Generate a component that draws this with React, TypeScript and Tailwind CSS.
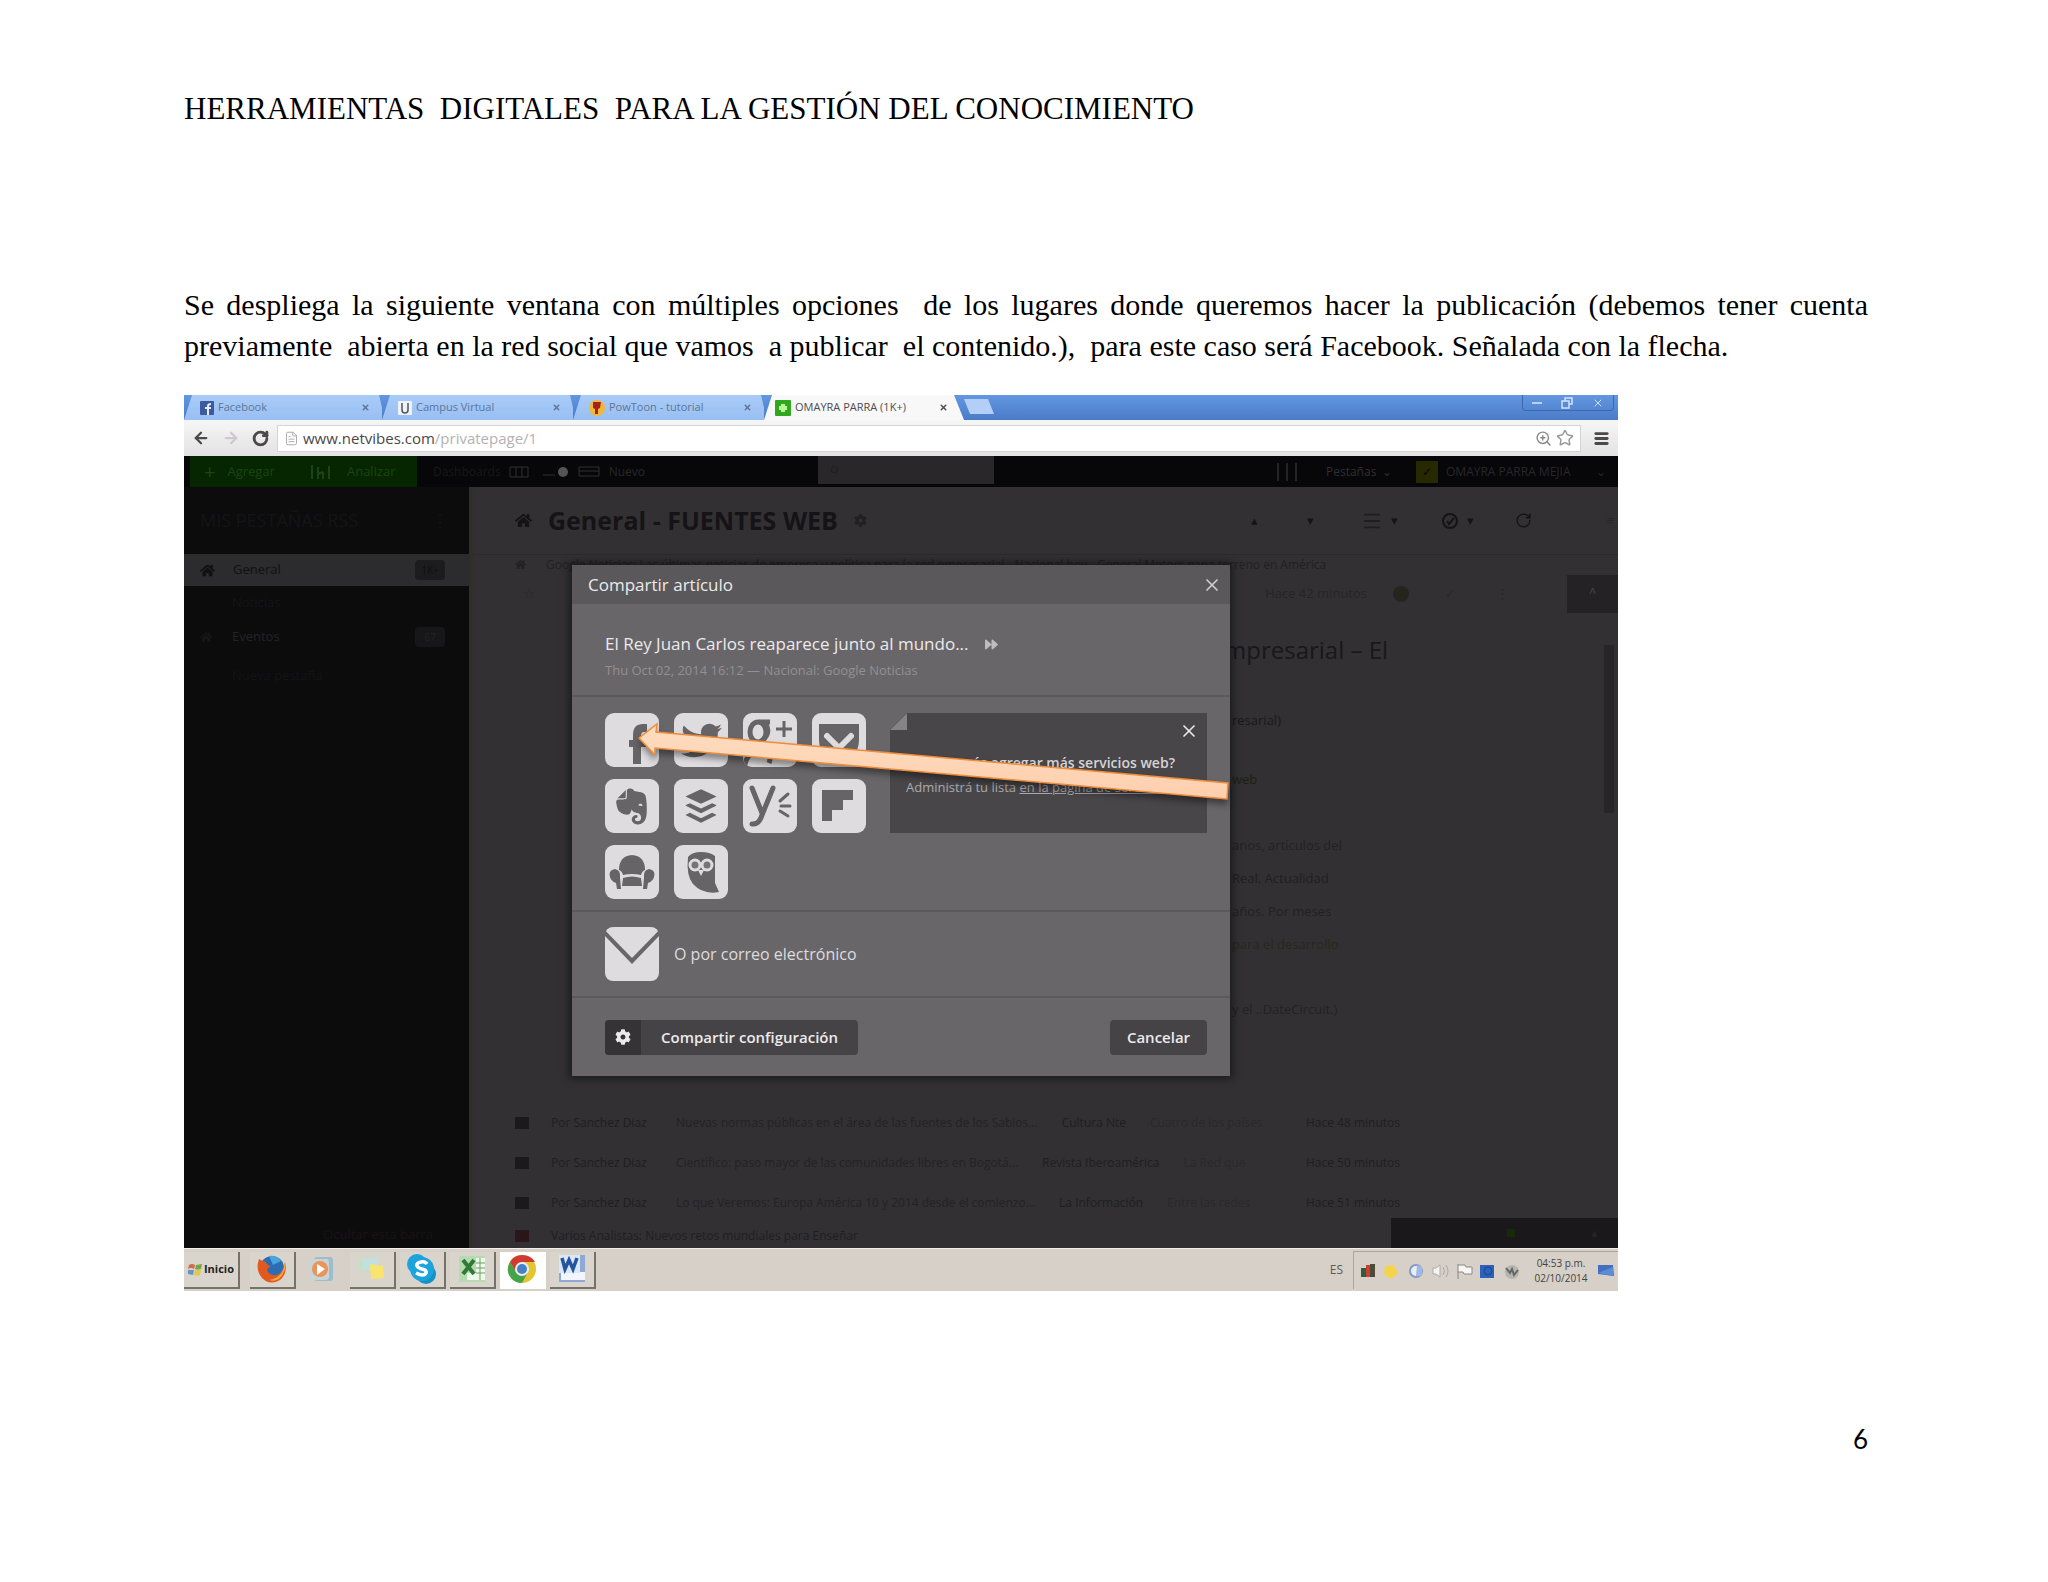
import React, { useState } from "react";
import { FaBuffer, FaCog, FaEvernote, FaForward, FaHome, FaTwitter } from "react-icons/fa";
import { ArrowLeft, ArrowRight, FileText, Menu, RotateCw, Search, Star, X, ZoomIn } from "lucide-react";

type Tab = { title: string; favicon: React.ReactNode; width: string };

const tabs: Tab[] = [
  {
    title: "Facebook",
    width: "w-[198px]",
    favicon: (
      <svg viewBox="0 0 14 14" className="size-3.5 shrink-0">
        <rect width="14" height="14" rx="1" fill="#3d5a9e" />
        <path d="M9 14V8h2V6H9V5q0-1 2-1V2Q7 2 7 5v1H5v2h2v6z" fill="#e6eefb" />
      </svg>
    ),
  },
  {
    title: "Campus Virtual",
    width: "w-[191px]",
    favicon: (
      <svg viewBox="0 0 14 14" className="size-3.5 shrink-0">
        <rect width="14" height="14" rx="1" fill="#eef2fa" />
        <path d="M4 2v7q0 3 3 3t3-3V2" fill="none" stroke="#555" strokeWidth="1.5" />
      </svg>
    ),
  },
  {
    title: "PowToon - tutorial",
    width: "w-[191px]",
    favicon: (
      <svg viewBox="0 0 16 16" className="size-4 shrink-0">
        <circle cx="8" cy="8" r="8" fill="#f0b838" />
        <path d="M4 2h8l-1 6-2 1v5H6V9L4 8z" fill="#a8201c" />
      </svg>
    ),
  },
];

const Favicon: React.FC = () => (
  <svg viewBox="0 0 16 16" className="size-4 shrink-0">
    <rect width="16" height="16" rx="1" fill="#2fa81d" />
    <path d="M8 4v8M4 8h8" stroke="#b9f59a" strokeWidth="4" />
  </svg>
);

const TabStrip: React.FC = () => (
  <div className="flex h-[25px] items-stretch overflow-hidden bg-linear-to-b from-[#6397e0] to-[#4a7bc8] text-[11px]">
    {tabs.map((tab) => (
      <div
        key={tab.title}
        className={`${tab.width} flex items-center gap-1 bg-linear-to-b from-[#a9cbf7] to-[#98bff2] pr-3 pl-4 text-[#5d7596] [clip-path:polygon(8px_0,calc(100%-3px)_0,100%_50%,100%_100%,0_100%)]`}
      >
        {tab.favicon}
        <span className="flex-1">{tab.title}</span>
        <button aria-label="Cerrar pestaña">
          <X size={9} strokeWidth={4} />
        </button>
      </div>
    ))}
    <div className="flex w-[200px] items-center gap-1 bg-[#f8f8f9] pr-[16px] pl-[11px] text-[#4f4b4e] [clip-path:polygon(8px_0,calc(100%-10px)_0,100%_100%,0_100%)]">
      <Favicon />
      <span className="flex-1">OMAYRA PARRA (1K+)</span>
      <button aria-label="Cerrar pestaña">
        <X size={9} strokeWidth={4} />
      </button>
    </div>
    <button
      aria-label="Nueva pestaña"
      className="mt-1 h-[15px] w-[30px] bg-[#b3cff7] [clip-path:polygon(0_0,24px_0,100%_100%,6px_100%)]"
    />
    <div className="mr-1 ml-auto flex h-4 w-[92px] items-center justify-around rounded-b border border-t-0 border-[#4067ad] text-[#d3e2fa]">
      <button aria-label="Minimizar" className="h-0.5 w-2.5 bg-[#b8d0f5]" />
      <button aria-label="Restaurar">
        <svg viewBox="0 0 12 12" className="size-3" fill="none" stroke="currentColor" strokeWidth="1.5">
          <rect x="1" y="4" width="7" height="7" />
          <path d="M4 4V1h7v6H8" />
        </svg>
      </button>
      <button aria-label="Cerrar">
        <X size={12} strokeWidth={2} />
      </button>
    </div>
  </div>
);

const Toolbar: React.FC = () => {
  const [url, setUrl] = useState<string>("");

  return (
    <div className="flex h-9 items-center bg-linear-to-b from-[#f6f6f7] to-[#e4e2e3] px-2 text-[#4a4849]">
      <button aria-label="Atrás">
        <ArrowLeft size={18} strokeWidth={3} />
      </button>
      <button aria-label="Adelante" className="ml-3 text-[#cccacc]">
        <ArrowRight size={18} strokeWidth={3} />
      </button>
      <button aria-label="Recargar" className="ml-3">
        <RotateCw size={17} strokeWidth={4} />
      </button>
      <div className="ml-2 flex h-[27px] flex-1 items-center border border-[#d5d3d5] bg-white px-1.5">
        <FileText size={15} className="text-[#a9a7a9]" strokeWidth={1.5} />
        <div className="relative ml-1 h-full flex-1">
          {url === "" && (
            <span className="pointer-events-none absolute inset-0 flex items-center text-[15px]">
              www.netvibes.com<span className="text-[#b3b1b3]">/privatepage/1</span>
            </span>
          )}
          <input
            aria-label="Dirección"
            value={url}
            onChange={(event) => setUrl(event.target.value)}
            className="h-full w-full bg-transparent text-[15px] outline-none"
          />
        </div>
        <ZoomIn size={17} className="text-[#888]" strokeWidth={2} />
        <Star size={18} className="ml-1 text-[#999]" strokeWidth={2} />
      </div>
      <button aria-label="Menú" className="ml-3">
        <Menu size={17} strokeWidth={4} />
      </button>
    </div>
  );
};

const TopBar: React.FC = () => (
  <div className="flex h-[31px] items-center bg-[#070609] pl-1.5 text-[12px] text-[#29272b]">
    <div className="flex h-full w-[227px] items-center bg-[#052600] pl-3.5 text-[13px] text-[#1d4513]">
      <button className="flex items-center gap-3">
        <span className="text-xl leading-4">+</span>Agregar
      </button>
      <button className="ml-9 flex items-center gap-4">
        <svg viewBox="0 0 20 14" className="h-3.5 w-5" stroke="currentColor" strokeWidth="2">
          <path d="M1 0v14M7 2v12M12 7v7M18 1v13M7 9l5-2" fill="none" />
        </svg>
        Analizar
      </button>
    </div>
    <span className="ml-4 text-[#19171b]">Dashboards</span>
    <svg viewBox="0 0 92 14" className="ml-2 h-3.5 w-[92px]" fill="none" stroke="#302e32">
      <path d="M1 2h18v10H1zM7 2v10M13 2v10M34 10h12M70 2h20v9H70zM70 6h20" />
      <circle cx="54" cy="7" r="5" fill="#555356" stroke="none" />
    </svg>
    <span className="ml-2 w-10">Nuevo</span>
    <div className="ml-[169px] flex h-full items-start">
      <label className="flex h-7 w-[176px] items-center bg-[#29272a] pl-3">
        <Search size={10} className="text-[#1b191c]" />
        <input aria-label="Buscar" className="w-full bg-transparent outline-none" />
      </label>
    </div>
    <div className="ml-auto flex items-center pr-3">
      <svg viewBox="0 0 22 18" className="h-[18px] w-[22px]" stroke="#252327" strokeWidth="2">
        <path d="M2 0v18M11 0v18M20 0v18" />
      </svg>
      <button className="ml-7 flex w-[66px] justify-between text-[#302e32]">
        Pestañas <span>⌄</span>
      </button>
      <span className="ml-6 flex size-[22px] items-center justify-center bg-[#272900] text-[#080800]">✓</span>
      <button className="ml-2 flex w-[160px] justify-between">
        OMAYRA PARRA MEJIA <span>⌄</span>
      </button>
    </div>
  </div>
);

const Sidebar: React.FC = () => (
  <nav className="flex w-[285px] shrink-0 flex-col bg-[#0c0c0d] text-[13px] text-[#1d1c1e]">
    <div className="flex h-[67px] items-center justify-between pr-5 pl-4 text-[18px] text-[#151416]">
      <span>MIS PESTAÑAS RSS</span>
      <span>⋮</span>
    </div>
    <a href="#general" className="flex h-8 items-center bg-[#2c2b2d] pr-6 pl-4 text-[#111012]">
      <FaHome size={15} />
      <span className="ml-[18px] flex-1">General</span>
      <span className="flex h-5 w-[30px] items-center justify-center rounded bg-[#1c1b1e] text-[10px]">1K+</span>
    </a>
    <a href="#noticias" className="flex h-[34px] items-center pl-12 text-[#151416]">
      Noticias
    </a>
    <a href="#eventos" className="flex h-[34px] items-center pr-6 pl-4 text-[#242326]">
      <FaHome size={12} className="text-[#171618]" />
      <span className="ml-5 flex-1">Eventos</span>
      <span className="flex h-5 w-[30px] items-center justify-center rounded bg-[#171618] text-[10px]">67</span>
    </a>
    <a href="#nueva" className="flex h-11 items-center pl-12 text-[#141315]">
      Nueva pestaña
    </a>
    <span className="mt-auto pr-9 pb-1 text-right text-[#181416]">Ocultar esta barra</span>
  </nav>
);

const articleLines = [
  { text: "resarial)", className: "h-[59px] text-[#1a181b]" },
  { text: "web", className: "h-[66px] text-[#1b2212]" },
  { text: "anos, artículos del", className: "h-[33px] text-[#232124]" },
  { text: "Real. Actualidad", className: "h-[33px] text-[#201e21]" },
  { text: "años. Por meses", className: "h-[33px] text-[#222023]" },
  { text: "para el desarrollo", className: "h-[65px] text-[#272719]" },
  { text: "y el ..DateCircuit.)", className: "text-[#232124]" },
];

const feedRows = [
  {
    title: "Por Sanchez Diaz",
    body: "Nuevas normas públicas en el área de las fuentes de los Sabios...",
    source: "Cultura Nte",
    detail: "Cuatro de los países",
    time: "Hace 48 minutos",
  },
  {
    title: "Por Sanchez Diaz",
    body: "Científico: paso mayor de las comunidades libres en Bogotá...",
    source: "Revista Iberoamérica",
    detail: "La Red que",
    time: "Hace 50 minutos",
  },
  {
    title: "Por Sanchez Diaz",
    body: "Lo que Veremos: Europa América 10 y 2014 desde el comienzo...",
    source: "La Información",
    detail: "Entre las redes",
    time: "Hace 51 minutos",
  },
];

const Feed: React.FC = () => (
  <main className="relative flex min-w-0 flex-1 flex-col border-l-4 border-[#2f302c] bg-[#323033] text-[13px] text-[#1e1c1f]">
    <header className="flex h-[67px] items-center pl-[42px] text-[#151316]">
      <FaHome size={17} />
      <h2 className="ml-4 font-['Open_Sans',sans-serif] text-[25px] font-bold whitespace-nowrap">General - FUENTES WEB</h2>
      <FaCog size={13} className="ml-4 text-[#211f22]" />
      <div className="ml-auto flex items-center pr-1">
        <span className="w-14">▴</span>
        <span className="w-[54px]">▾</span>
        <Menu size={22} strokeWidth={2} className="text-[#1f1d20]" />
        <span className="ml-2 w-[50px]">▾</span>
        <svg viewBox="0 0 18 18" className="size-[18px]" fill="none" stroke="currentColor" strokeWidth="2">
          <circle cx="9" cy="9" r="7" />
          <path d="m6 9 2 3 5-6" />
        </svg>
        <span className="ml-2 w-12">▾</span>
        <RotateCw size={17} strokeWidth={2} />
        <span className="ml-[74px] text-[#29272a]">≡</span>
      </div>
    </header>
    <div className="flex h-5 items-center border-t border-[#2c2a2d] pl-[42px] text-[12px] leading-3 whitespace-nowrap text-[#222023]">
      <FaHome size={11} />
      <span className="ml-5">
        Google Noticias: Las últimas noticias de empresa y política para la red empresarial - Nacional hoy - General Motors
        gana terreno en América
      </span>
    </div>
    <div className="flex h-[40px] items-center pl-[50px]">
      <span className="text-[#29272a]">☆</span>
      <span className="ml-auto text-[#262427]">Hace 42 minutos</span>
      <span className="ml-[26px] size-4 rounded-full bg-[#25241d]" />
      <span className="ml-9 text-[#2a282b]">✓</span>
      <span className="ml-10 text-[#2a282b]">⋮</span>
      <button aria-label="Subir" className="ml-[58px] h-[38px] w-[51px] bg-[#242225] pb-1 text-[#454346]">
        ˄
      </button>
    </div>
    <article className="flex h-[489px] justify-end">
      <div className="w-[372px] pt-5">
        <h3 className="-ml-2 h-[77px] font-['Open_Sans',sans-serif] text-[24px] leading-8 whitespace-nowrap text-[#19171a]">
          mpresarial – El
        </h3>
        {articleLines.map((line) => (
          <p key={line.text} className={line.className}>
            {line.text}
          </p>
        ))}
      </div>
      <span className="mt-[31px] mr-1 h-[168px] w-2.5 bg-[#272528]" />
    </article>
    <ul className="text-[12px] text-[#201e21]">
      {feedRows.map((row) => (
        <li key={row.time} className="flex h-10 items-center pr-[218px] pl-[42px] whitespace-nowrap">
          <span className="h-3 w-3.5 bg-[#1b191c]" />
          <span className="ml-[22px] w-[125px]">{row.title}</span>
          <span className="text-[#242225]">{row.body}</span>
          <span className="ml-6">{row.source}</span>
          <span className="ml-6 text-[#2a282b]">{row.detail}</span>
          <span className="ml-auto">{row.time}</span>
        </li>
      ))}
      <li className="flex h-[25px] items-center pl-[42px]">
        <span className="h-3 w-3.5 bg-[#2a1518]" />
        <span className="ml-[22px]">Varios Analistas: Nuevos retos mundiales para Enseñar</span>
      </li>
    </ul>
    <div className="absolute right-0 bottom-0 flex h-[30px] w-[227px] items-center justify-end gap-[76px] bg-[#1a181b] px-5 text-[#252326]">
      <span className="size-2 bg-[#142b07]" />
      <span>▴</span>
    </div>
  </main>
);

const services: { name: string; icon: React.ReactNode }[] = [
  {
    name: "Facebook",
    icon: <path d="M28 51V34h-4v-7h4v-5q0-11 10-11h4v8h-3q-3 0-3 4v4h6l-1 7h-5v17z" fill="currentColor" />,
  },
  { name: "Twitter", icon: <FaTwitter x="7" y="7" size={41} /> },
  {
    name: "Google+",
    icon: (
      <g fill="none" stroke="currentColor">
        <ellipse cx="15" cy="19" rx="8" ry="10" strokeWidth="5" />
        <path d="M16 9h11M22 10q6 8-1 16-6 4-1 8 10 6 6 16" strokeWidth="5" />
        <path d="M2 52q2-14 18-15" strokeWidth="5" />
        <path d="M41 8v16M33 16h16" strokeWidth="3" />
      </g>
    ),
  },
  {
    name: "Pocket",
    icon: (
      <>
        <path d="M7 11h40v16q0 18-20 21Q7 45 7 27z" fill="currentColor" />
        <path d="m15 23 12 12 12-12" fill="none" stroke="#dedcde" strokeWidth="6" strokeLinecap="round" strokeLinejoin="round" />
      </>
    ),
  },
  { name: "Evernote", icon: <FaEvernote x="6" y="7" size={41} /> },
  { name: "Buffer", icon: <FaBuffer x="8" y="8" size={38} /> },
  {
    name: "Yammer",
    icon: (
      <g fill="none" stroke="currentColor" strokeLinecap="round" strokeWidth="5">
        <path d="m9 9 10 25M30 9 19 36q-3 10-10 9" />
        <path d="m37 22 8-7M38 27h9M37 32l8 5" strokeWidth="3" />
      </g>
    ),
  },
  { name: "Flipboard", icon: <path d="M10 11h31v10H31v10H20v11H10z" fill="currentColor" /> },
  {
    name: "Readability",
    icon: (
      <g fill="currentColor">
        <path d="M14 25q0-14 13-15 13 1 13 15-3 1-4 5-9-2-18 0-1-4-4-5z" />
        <path d="M18 33q9-3 18 0l1 8H17z" />
        <path d="M5 32q-2-7 5-8 6 1 5 9l1 11h-4l-1-6q-5-2-6-6zM49 32q2-7-5-8-6 1-5 9l-1 11h4l1-6q5-2 6-6z" />
      </g>
    ),
  },
  {
    name: "HootSuite",
    icon: (
      <>
        <path d="M14 12q4-5 13-5t14 4v27l4 9q-16 3-26-8-7-8-5-27z" fill="currentColor" />
        <g fill="#767476" stroke="#dedcde" strokeWidth="3">
          <circle cx="21" cy="20" r="5" />
          <circle cx="33" cy="20" r="5" />
        </g>
        <path d="m24 25 3 6 3-6z" fill="#dedcde" />
      </>
    ),
  },
];

const PointerArrow: React.FC = () => (
  <svg
    viewBox="0 0 610 100"
    className="pointer-events-none absolute top-[150px] left-[60px] h-[100px] w-[610px] drop-shadow-[0_5px_3px_rgba(0,0,0,0.4)]"
  >
    <defs>
      <linearGradient id="peach" x1="0" y1="0" x2="0" y2="1">
        <stop offset="0" stopColor="#ffdcc0" />
        <stop offset="1" stopColor="#fdcfae" />
      </linearGradient>
    </defs>
    <path d="M7 23 25 9l-1 8 572 51-1 16L23 33v7z" fill="url(#peach)" stroke="#ee8c3a" strokeWidth="1.5" />
  </svg>
);

const ShareDialog: React.FC = () => {
  const [showTip, setShowTip] = useState<boolean>(true);

  return (
    <div
      role="dialog"
      aria-label="Compartir artículo"
      className="relative w-[658px] bg-[#686668] font-['Open_Sans',sans-serif] text-[#eceaec] shadow-[0_0_8px_3px_rgba(0,0,0,0.45)]"
    >
      <div className="flex h-[39px] items-center justify-between bg-[#5a585a] pr-2 pl-4">
        <h2 className="text-[17px] font-medium">Compartir artículo</h2>
        <button aria-label="Cerrar" className="text-[#d0ced0]">
          <X size={20} strokeWidth={2} />
        </button>
      </div>
      <div className="h-[93px] border-b-2 border-[#5b595b] pt-7 pl-[33px]">
        <p className="flex items-center gap-4 text-[17px] leading-6">
          El Rey Juan Carlos reaparece junto al mundo... <FaForward size={13} className="text-[#bebcbe]" />
        </p>
        <p className="pt-0.5 text-[13px] leading-6 text-[#929092]">Thu Oct 02, 2014 16:12 — Nacional: Google Noticias</p>
      </div>
      <div className="flex h-[215px] items-start justify-between border-b-2 border-[#5b595b] pt-4 pr-[23px] pl-[33px]">
        <div className="grid grid-cols-4 gap-x-[15px] gap-y-3">
          {services.map((service) => (
            <button
              key={service.name}
              aria-label={service.name}
              className="size-[54px] overflow-hidden rounded-[9px] bg-[#dedcde] text-[#666466]"
            >
              <svg viewBox="0 0 54 54" className="size-full">
                {service.icon}
              </svg>
            </button>
          ))}
        </div>
        {showTip && (
          <div className="relative h-[120px] w-[317px] bg-[#484649] px-4 pt-9 [clip-path:polygon(0_17px,17px_0,100%_0,100%_100%,0_100%)]">
            <svg viewBox="0 0 17 17" className="absolute top-0 left-0 size-[17px]">
              <path d="M0 17 17 0v17z" fill="#858385" />
            </svg>
            <button aria-label="Cerrar" onClick={() => setShowTip(false)} className="absolute top-2 right-2">
              <X size={20} strokeWidth={2} />
            </button>
            <p className="pr-4 text-right text-[14px] leading-7 font-semibold whitespace-nowrap text-[#d5d3d5]">
              ¿Querés agregar más servicios web?
            </p>
            <p className="text-[13px] leading-5 whitespace-nowrap text-[#acaaac]">
              Administrá tu lista{" "}
              <a href="#servicios" className="underline">
                en la página de servicios
              </a>
            </p>
          </div>
        )}
      </div>
      <div className="flex h-[86px] items-center border-b-2 border-[#5b595b] pl-[33px]">
        <button className="flex items-center gap-[15px] text-[16px] text-[#dedcde]">
          <svg viewBox="0 0 54 54" className="size-[54px]">
            <rect width="54" height="54" rx="8" fill="#dedcde" />
            <path d="m-2 4 29 30L56 4" fill="none" stroke="#686668" strokeWidth="4" />
          </svg>
          O por correo electrónico
        </button>
      </div>
      <div className="flex h-[78px] items-center justify-between pr-[23px] pl-[33px] text-[15px] font-semibold">
        <button className="flex h-[35px] w-[253px] items-center overflow-hidden rounded bg-[#454346]">
          <span className="flex h-full w-9 items-center justify-center bg-[#353336]">
            <FaCog size={16} />
          </span>
          <span className="flex-1">Compartir configuración</span>
        </button>
        <button className="h-[35px] w-[97px] rounded bg-[#454346]">Cancelar</button>
      </div>
      <PointerArrow />
    </div>
  );
};

const launchers: { name: string; active?: boolean; flat?: boolean; icon: React.ReactNode }[] = [
  {
    name: "Firefox",
    icon: (
      <>
        <circle cx="17" cy="15" r="12" fill="#2b6cb5" />
        <path d="M14 3q8-1 12 5l-8 4z" fill="#49a5dc" />
        <path d="M4 6q-4 11 3 19 8 8 18 2 8-7 5-18-1 10-8 13-9 1-10-6l4-3q-5-1-5-4-4-1-7-3z" fill="#e05a20" />
        <path d="M30 9q2 9-6 17-5 3-10 1 13-2 15-14z" fill="#f3a63a" />
      </>
    ),
  },
  {
    name: "Reproductor",
    flat: true,
    icon: (
      <>
        <rect x="9" y="4" width="19" height="24" rx="3" fill="#9fbccb" />
        <rect x="5" y="6" width="19" height="21" rx="3" fill="#c9d4d8" />
        <circle cx="15" cy="16" r="8" fill="#e8945a" />
        <path d="m12 11 8 5-8 6z" fill="#fff" />
      </>
    ),
  },
  {
    name: "Notas",
    icon: (
      <>
        <path d="M4 6h13v12H4z" fill="#bfe3c4" />
        <path d="M8 5h14v12H8z" fill="#c2e0e2" />
        <path d="m15 11 13 2 1 12-13 1z" fill="#fae46e" />
      </>
    ),
  },
  {
    name: "Skype",
    icon: (
      <>
        <circle cx="12" cy="11" r="10" fill="#1ba4dc" />
        <circle cx="21" cy="21" r="10" fill="#1592c9" />
        <circle cx="17" cy="16" r="12" fill="#1ba4dc" />
        <path d="M22 11q-2-3-6-2-5 1-4 4 1 2 5 3 5 1 4 4-2 4-10 0" fill="none" stroke="#fff" strokeWidth="3.5" />
      </>
    ),
  },
  {
    name: "Excel",
    icon: (
      <>
        <rect x="4" y="3" width="26" height="26" fill="#b5dbb2" />
        <path d="M21 5h9v22H12v-7h9z" fill="#eef8eb" />
        <path d="M21 10h9M21 15h9M21 20h9M25 5v22" stroke="#6ea168" />
        <path d="m8 7 11 14M19 7 8 21" stroke="#2f7a35" strokeWidth="4" />
      </>
    ),
  },
  {
    name: "Chrome",
    active: true,
    icon: (
      <>
        <circle cx="17" cy="16" r="14" fill="#e4c531" />
        <path d="M5 9q4-7 12-7 9 0 13 7H17l-6 10z" fill="#cf3b30" />
        <path d="M5 9q-5 9 1 16 4 5 11 5l6-11H11z" fill="#45a349" />
        <circle cx="17" cy="16" r="7" fill="#eee" />
        <circle cx="17" cy="16" r="5" fill="#4680c9" />
      </>
    ),
  },
  {
    name: "Word",
    icon: (
      <>
        <rect x="4" y="2" width="26" height="27" fill="#8fa9d4" />
        <path d="M6 19h24v8H6z" fill="#f2f5fb" />
        <rect x="4" y="2" width="21" height="18" fill="#dbe6f7" />
        <path d="m7 5 3 11 4-9 4 9 4-11" fill="none" stroke="#24549f" strokeWidth="3.5" />
      </>
    ),
  },
];

const Taskbar: React.FC = () => (
  <footer className="flex h-[43px] items-center border-t border-[#f2efea] bg-[#d6d0c8] py-0.5">
    <button className="flex h-[37px] w-14 items-center justify-center gap-0.5 border-r-2 border-b-2 border-[#75716b] bg-[#d9d4cc] text-[11px] font-bold text-[#222]">
      <svg viewBox="0 0 14 14" className="size-3.5">
        <path d="M1 3q3-2 6 0l-1 4q-3-2-6 0z" fill="#cf6b48" />
        <path d="m8 3 6-1-1 5q-3 1-6 0z" fill="#72a947" />
        <path d="m0 8 6 0-1 5-5-1z" fill="#6b91c9" />
        <path d="m7 8 6 0-1 5q-3 1-6 0z" fill="#e0c84f" />
      </svg>
      Inicio
    </button>
    <div className="ml-2.5 flex gap-1">
      {launchers.map((launcher) => (
        <button
          key={launcher.name}
          aria-label={launcher.name}
          className={`flex h-[37px] w-[46px] items-center justify-center border-r-2 border-b-2 ${
            launcher.active
              ? "border-white bg-white"
              : launcher.flat
                ? "border-transparent"
                : "border-[#75716b] bg-[#d9d4cc]"
          }`}
        >
          <svg viewBox="0 0 34 32" className="h-8 w-[34px]">
            {launcher.icon}
          </svg>
        </button>
      ))}
    </div>
    <span className="ml-auto text-[12px] text-[#5e5a55]">ES</span>
    <div className="ml-2.5 flex h-full items-center border-t border-l border-[#aaa59c] pr-1 pl-1.5">
      <svg viewBox="0 0 168 24" className="h-6 w-[168px]">
        <path d="M1 9h5v9H1z" fill="#315d3a" />
        <path d="M6 6h6v12H6z" fill="#c84036" />
        <path d="M10 5h5v13h-5z" fill="#4b4b36" />
        <path d="m25 7 9-1 4 9-8 5-6-5z" fill="#f5d44d" />
        <circle cx="56" cy="12" r="6" fill="#e9eff8" stroke="#819bc7" strokeWidth="2" />
        <path d="m57 6 5 2v9h-6z" fill="#9fb9e3" />
        <path d="M73 9h3l4-3v12l-4-3h-3z" fill="#f5f5f2" stroke="#aaa" />
        <path d="M83 8q3 4 0 8M86 6q4 6 0 12" fill="none" stroke="#aaa" />
        <path d="M98 5v15M98 6h7l1 2h6v7h-8l-1-2h-5" fill="#f7f7f4" stroke="#888" />
        <rect x="120" y="6" width="14" height="13" fill="#2d61b8" />
        <circle cx="128" cy="12" r="4" fill="none" stroke="#174590" />
        <circle cx="152" cy="13" r="7" fill="#b5b7ae" />
        <path d="m146 9 4 5 2-4 2 6 4-5" fill="none" stroke="#666" strokeWidth="2" />
      </svg>
      <time className="ml-1 w-[58px] text-center text-[10px] leading-[15px] whitespace-nowrap text-[#45423f]">
        04:53 p.m.
        <br />
        02/10/2014
      </time>
      <svg viewBox="0 0 16 14" className="ml-2 h-3.5 w-4">
        <path d="M0 1h15l1 11-16-2z" fill="#426fc0" />
        <path d="m0 9 15-6v9z" fill="#5e8bd1" />
      </svg>
    </div>
  </footer>
);

const App: React.FC = () => (
  <div className="bg-white pt-[88px] pr-[180px] pb-[118px] pl-[184px] font-['Liberation_Serif',serif] text-black">
    <h1 className="text-[31px] leading-[41px]">
      HERRAMIENTAS&nbsp; DIGITALES&nbsp; PARA LA GESTIÓN DEL CONOCIMIENTO
    </h1>
    <p className="mt-[155px] text-justify text-[30px] leading-[41px]">
      Se despliega la siguiente ventana con múltiples opciones&nbsp; de los lugares donde queremos hacer la publicación
      (debemos tener cuenta previamente&nbsp; abierta en la red social que vamos&nbsp; a publicar&nbsp; el contenido.),&nbsp;
      para este caso será Facebook. Señalada con la flecha.
    </p>
    <section className="mt-[29px] w-[calc(100%-250px)] overflow-hidden font-['Open_Sans',sans-serif]">
      <TabStrip />
      <Toolbar />
      <div className="relative">
        <TopBar />
        <div className="flex h-[761px] overflow-hidden">
          <Sidebar />
          <Feed />
        </div>
        <div className="absolute inset-0 flex items-start justify-center pt-[109px]">
          <ShareDialog />
        </div>
      </div>
      <Taskbar />
    </section>
    <p className="mt-[128px] text-right font-['Lato',sans-serif] text-[26px] leading-10">6</p>
  </div>
);

export default App;
